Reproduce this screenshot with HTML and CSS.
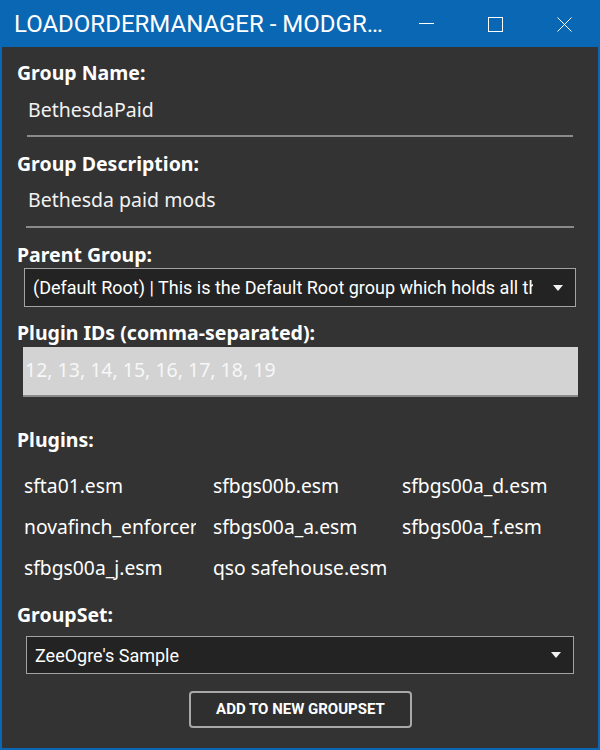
FILE: index.html
```html
<!DOCTYPE html>
<html>
<head>
<meta charset="utf-8">
<link rel="stylesheet" href="styles.css">
</head>
<body>
<div class="window">
  <div class="titlebar">
    <div class="title">LOADORDERMANAGER - MODGR…</div>
    <div class="caption-buttons">
      <div class="cap-btn">
        <svg width="15" height="15" viewBox="0 0 15 15"><line x1="0" y1="6.5" x2="15" y2="6.5" stroke="#ffffff" stroke-width="1"/></svg>
      </div>
      <div class="cap-btn">
        <svg width="15" height="15" viewBox="0 0 15 15"><rect x="0.5" y="0.5" width="14" height="14" fill="none" stroke="#ffffff" stroke-width="1"/></svg>
      </div>
      <div class="cap-btn">
        <svg width="15" height="15" viewBox="0 0 15 15"><line x1="0.5" y1="0.5" x2="14.5" y2="14.5" stroke="#ffffff" stroke-width="1"/><line x1="14.5" y1="0.5" x2="0.5" y2="14.5" stroke="#ffffff" stroke-width="1"/></svg>
      </div>
    </div>
  </div>
  <div class="content">
    <div class="label label-first">Group Name:</div>
    <div class="textbox tb-name">BethesdaPaid</div>

    <div class="label">Group Description:</div>
    <div class="textbox tb-desc">Bethesda paid mods</div>

    <div class="label">Parent Group:</div>
    <div class="combo combo-parent">
      <div class="combo-text">(Default Root) | This is the Default Root group which holds all the plugins</div>
      <div class="combo-arrow"><svg width="10" height="6" viewBox="0 0 10 6"><polygon points="0,0 10,0 5,6" fill="#f2f2f2"/></svg></div>
    </div>

    <div class="label label-ids">Plugin IDs (comma-separated):</div>
    <div class="ids-box">12, 13, 14, 15, 16, 17, 18, 19</div>

    <div class="label label-plugins">Plugins:</div>
    <div class="plugin-grid">
      <div class="plugin">sfta01.esm</div>
      <div class="plugin">sfbgs00b.esm</div>
      <div class="plugin">sfbgs00a_d.esm</div>
      <div class="plugin">novafinch_enforcer.esm</div>
      <div class="plugin">sfbgs00a_a.esm</div>
      <div class="plugin">sfbgs00a_f.esm</div>
      <div class="plugin">sfbgs00a_j.esm</div>
      <div class="plugin">qso safehouse.esm</div>
    </div>

    <div class="label">GroupSet:</div>
    <div class="combo combo-groupset">
      <div class="combo-text">ZeeOgre's Sample</div>
      <div class="combo-arrow"><svg width="10" height="6" viewBox="0 0 10 6"><polygon points="0,0 10,0 5,6" fill="#f2f2f2"/></svg></div>
    </div>

    <div class="button-row">
      <div class="button">ADD TO NEW GROUPSET</div>
    </div>
  </div>
</div>
</body>
</html>
```
FILE: styles.css
```css
* {
  box-sizing: border-box;
}

html, body {
  margin: 0;
  padding: 0;
  background: #0a67b4;
}

.window {
  width: 600px;
  height: 750px;
  background: #0a67b4;
  padding: 0 2px 2px 2px;
  display: flex;
  flex-direction: column;
  overflow: hidden;
}

.titlebar {
  height: 47px;
  margin: 0 -2px;
  display: flex;
  align-items: flex-start;
  color: #ffffff;
}

.title {
  flex: 1;
  font-family: Roboto, "Liberation Sans", sans-serif;
  font-size: 24px;
  line-height: 46px;
  padding-top: 1px;
  padding-left: 14px;
  white-space: nowrap;
}

.caption-buttons {
  display: flex;
  padding-right: 1px;
}

.cap-btn {
  width: 69px;
  height: 47px;
  display: flex;
  justify-content: center;
  padding-top: 17px;
}

.cap-btn svg {
  display: block;
}

.content {
  flex: 1;
  background: #333333;
  display: flex;
  flex-direction: column;
  font-family: "Noto Sans", "Open Sans", sans-serif;
  color: #ffffff;
}

.label {
  font-family: "Noto Sans", "Open Sans", sans-serif;
  font-weight: 700;
  font-size: 19.5px;
  line-height: 26px;
  height: 26px;
  padding-left: 15px;
  margin-top: 14px;
  white-space: nowrap;
}

.label-first {
  margin-top: 13px;
}

.label-ids {
  margin-top: 13px;
}

.label-plugins {
  margin-top: 30px;
}

.textbox {
  font-size: 19.5px;
  line-height: 26px;
  color: #f2f2f2;
  border-bottom: 2px solid #8a8a8a;
  white-space: nowrap;
}

.tb-name {
  margin-left: 25px;
  width: 546px;
  padding: 11px 2px 12px 1px;
}

.tb-desc {
  margin-left: 24px;
  width: 548px;
  padding: 10px 2px 13px 2px;
}

.combo {
  display: flex;
  align-items: center;
  background: #232323;
  border: 1px solid #a3a3a3;
  font-family: Roboto, "Liberation Sans", sans-serif;
  font-size: 18px;
  color: #ffffff;
}

.combo-parent {
  margin-left: 22px;
  width: 552px;
  height: 39px;
  padding-left: 8px;
}

.combo-groupset {
  margin-top: 8px;
  margin-left: 24px;
  width: 548px;
  height: 38px;
  padding-left: 8px;
}

.combo-text {
  flex: 1;
  overflow: hidden;
  white-space: nowrap;
}

.combo-arrow {
  width: 42px;
  display: flex;
  justify-content: flex-end;
  padding-right: 12px;
}

.combo-arrow svg {
  display: block;
}

.ids-box {
  margin-top: 1px;
  margin-left: 21px;
  width: 555px;
  height: 50px;
  background: #d3d3d3;
  border-bottom: 2px solid #8a8a8a;
  padding: 10px 2px 0 2px;
  font-size: 19.5px;
  line-height: 26px;
  color: #f7f7f7;
  white-space: nowrap;
}

.plugin-grid {
  margin-top: 12px;
  padding-left: 22px;
  display: grid;
  grid-template-columns: repeat(3, 189px);
  grid-auto-rows: 41px;
}

.plugin {
  width: 174px;
  font-size: 19.3px;
  line-height: 41px;
  overflow: hidden;
  white-space: nowrap;
  color: #ffffff;
}

.plugin:nth-child(3n+1) {
  width: 172px;
}

.button-row {
  margin-top: 17px;
  display: flex;
  justify-content: center;
}

.button {
  width: 223px;
  height: 37px;
  border: 2px solid #a8a8a8;
  border-radius: 4px;
  background: #2f2f2f;
  font-family: Roboto, "Liberation Sans", sans-serif;
  font-weight: 700;
  font-size: 15px;
  line-height: 33px;
  text-align: center;
  color: #ffffff;
  margin-left: 1px;
}
```
